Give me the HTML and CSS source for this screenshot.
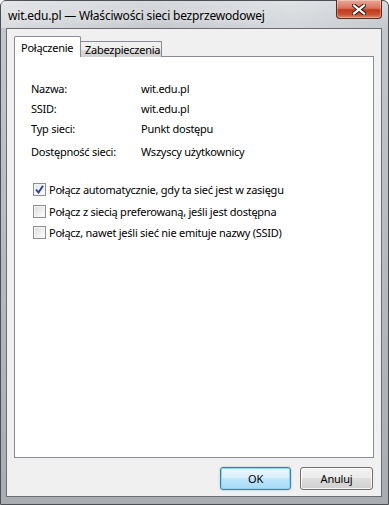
FILE: index.html
```html
<!DOCTYPE html>
<html lang="pl">
<head>
<meta charset="utf-8">
<title>Właściwości sieci bezprzewodowej</title>
<link rel="stylesheet" href="styles.css">
</head>
<body>
<div class="window">
  <div class="titlebar">
    <span class="title">wit.edu.pl — Właściwości sieci bezprzewodowej</span>
    <button class="close" aria-label="Zamknij">
      <svg width="14" height="11" viewBox="0 0 14 11">
        <path d="M2 1.5 L12 9.5 M12 1.5 L2 9.5" stroke="#3a1a14" stroke-width="4.2" stroke-linecap="square"/>
        <path d="M2 1.5 L12 9.5 M12 1.5 L2 9.5" stroke="#ffffff" stroke-width="2.2" stroke-linecap="square"/>
      </svg>
    </button>
  </div>
  <div class="client">
    <div class="tabs">
      <div class="tab active">Połączenie</div>
      <div class="tab">Zabezpieczenia</div>
    </div>
    <div class="panel">
      <div class="props">
        <span class="label">Nazwa:</span><span class="value">wit.edu.pl</span>
        <span class="label">SSID:</span><span class="value">wit.edu.pl</span>
        <span class="label">Typ sieci:</span><span class="value">Punkt dostępu</span>
        <span class="label">Dostępność sieci:</span><span class="value">Wszyscy użytkownicy</span>
      </div>
      <div class="checks">
        <label class="check"><span class="box checked">
          <svg width="9" height="9" viewBox="0 0 9 9"><path d="M1 4.5 L3.5 7.5 L8 0.8" fill="none" stroke="#2a3f8a" stroke-width="1.9"/></svg>
        </span>Połącz automatycznie, gdy ta sieć jest w zasięgu</label>
        <label class="check"><span class="box"></span>Połącz z siecią preferowaną, jeśli jest dostępna</label>
        <label class="check"><span class="box"></span>Połącz, nawet jeśli sieć nie emituje nazwy (SSID)</label>
      </div>
    </div>
    <div class="buttons">
      <button class="btn default">OK</button>
      <button class="btn">Anuluj</button>
    </div>
  </div>
</div>
</body>
</html>
```
FILE: styles.css
```css
html, body {
  margin: 0;
  padding: 0;
  background: #ffffff;
}
body {
  width: 389px;
  height: 505px;
  overflow: hidden;
  font-family: "Noto Sans", "DejaVu Sans", sans-serif;
  font-size: 11px;
  letter-spacing: -0.25px;
  color: #000;
}
.window {
  box-sizing: border-box;
  width: 389px;
  height: 505px;
  border: 1px solid #4c4f54;
  border-radius: 6px 6px 0 0;
  background: linear-gradient(180deg, #d6d9dd 0%, #c3c7cc 6%, #a9acb0 100%);
  display: flex;
  flex-direction: column;
  padding: 0 6px 7px 5px;
}
.titlebar {
  height: 27px;
  display: flex;
  align-items: flex-start;
  justify-content: space-between;
  background: linear-gradient(90deg, rgba(255,255,255,0.35), rgba(255,255,255,0) 40%, rgba(255,255,255,0.25) 75%, rgba(255,255,255,0));
  margin: 0 -6px 0 -5px;
  padding: 0 6px 0 5px;
}
.title {
  margin-top: 7px;
  margin-left: 2px;
  font-size: 12px;
  line-height: 15px;
  letter-spacing: -0.2px;
  color: #000;
  text-shadow: 0 0 8px rgba(255,255,255,0.9);
}
.close {
  width: 46px;
  height: 19px;
  margin-top: -1px;
  margin-right: 0;
  border: 1px solid #5a2a22;
  border-top: none;
  border-radius: 0 0 4px 4px;
  background: linear-gradient(180deg, #e9a99a 0%, #d9735d 45%, #c03a1d 55%, #c9502e 80%, #e0896a 100%);
  display: flex;
  align-items: center;
  justify-content: center;
  padding: 0;
  box-shadow: inset 0 0 0 1px rgba(255,255,255,0.3);
}
.client {
  flex: 1;
  border: 1px solid #6b6e73;
  background: #f0f0f0;
  padding: 7px 7px 0 7px;
  display: flex;
  flex-direction: column;
}
.tabs {
  display: flex;
  align-items: flex-end;
  height: 21px;
  position: relative;
  z-index: 1;
  margin-bottom: -1px;
}
.tab {
  box-sizing: border-box;
  height: 16px;
  padding: 0 0 0 4px;
  border: 1px solid #898c95;
  border-bottom: none;
  border-left: none;
  background: linear-gradient(180deg, #f2f2f2 0%, #ebebeb 50%, #dddddd 51%, #cfcfcf 100%);
  line-height: 15px;
  color: #000;
  width: 81px;
  white-space: nowrap;
}
.tab.active {
  height: 21px;
  width: 67px;
  background: #ffffff;
  border-left: 1px solid #898c95;
  padding: 3px 0 0 6px;
  border-radius: 2px 2px 0 0;
}
.panel {
  box-sizing: border-box;
  width: 360px;
  height: 402px;
  border: 1px solid #898c95;
  background: #ffffff;
  padding: 21px 0 0 16px;
}
.props {
  display: grid;
  grid-template-columns: 110px auto;
  grid-auto-rows: 20px;
  align-items: center;
}
.props span:nth-child(7), .props span:nth-child(8) {
  position: relative;
  top: 3px;
}
.checks {
  margin-top: 25px;
  display: flex;
  flex-direction: column;
  gap: 8.5px;
}
.check {
  display: flex;
  align-items: center;
  height: 13px;
  padding-left: 2px;
  line-height: 13px;
}
.box {
  box-sizing: border-box;
  width: 13px;
  height: 13px;
  border: 1px solid #8e8f8f;
  background: linear-gradient(135deg, #dcdcdc 0%, #ffffff 100%);
  box-shadow: inset 0 0 0 1px #f4f4f4;
  margin-right: 3px;
  display: flex;
  align-items: center;
  justify-content: center;
  flex: none;
}
.box.checked {
  background: linear-gradient(135deg, #dce6f4 0%, #ffffff 100%);
}
.buttons {
  display: flex;
  justify-content: flex-end;
  gap: 9px;
  padding: 9px 1px 0 0;
}
.btn {
  box-sizing: border-box;
  width: 73px;
  height: 23px;
  border: 1px solid #707070;
  border-radius: 3px;
  background: linear-gradient(180deg, #f2f2f2 0%, #ebebeb 49%, #dddddd 50%, #cfcfcf 100%);
  box-shadow: inset 0 0 0 1px rgba(255,255,255,0.8);
  font-family: "Noto Sans", "DejaVu Sans", sans-serif;
  font-size: 11px;
  letter-spacing: -0.2px;
  color: #000;
  padding: 0;
}
.btn.default {
  width: 71px;
  border-color: #3c7fb1;
  background: linear-gradient(180deg, #eaf6fd 0%, #d9f0fc 49%, #bee6fd 50%, #a7d9f5 100%);
  box-shadow: inset 0 0 0 1px #8ed4f7, 0 0 2px rgba(60,127,177,0.5);
}
```
